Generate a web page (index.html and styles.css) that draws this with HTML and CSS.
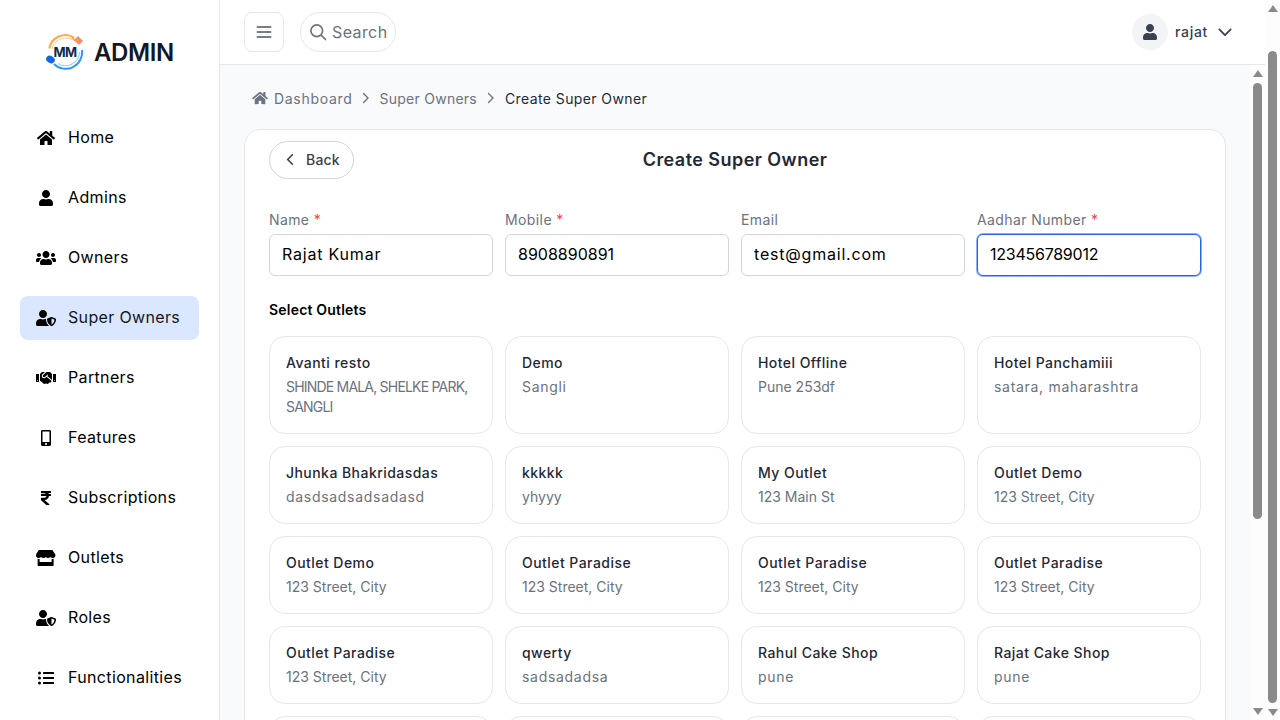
FILE: index.html
```html
<!DOCTYPE html>
<html lang="en">
<head>
    <meta charset="UTF-8">
    <meta name="viewport" content="width=device-width, initial-scale=1.0">
    <title>Create Super Owner</title>
    <link rel="stylesheet" href="styles.css">
</head>
<body>
    <div class="app">
        <aside class="sidebar">
            <div class="brand">
                <svg class="brand-logo" viewBox="0 0 40 38">
                    <path d="M4.200 15.500 A16.500 16.500 0 0 1 29 4.500" fill="none" stroke="#f9a94f" stroke-width="2"/>
                    <path d="M7 16 A14 14 0 0 1 27 6.500" fill="none" stroke="#fbc98d" stroke-width="1"/>
                    <path d="M37 17 A16.500 16.500 0 0 1 9 31" fill="none" stroke="#2b9af3" stroke-width="2"/>
                    <path d="M34.500 19 A14 14 0 0 1 13 30.500" fill="none" stroke="#86cbfb" stroke-width="1"/>
                    <path d="M29 7 L33 3 L38 8 L34 12 Z" fill="#f58f63"/>
                    <path d="M27 4.500 L31 8.500" stroke="#f9a94f" stroke-width="2"/>
                    <ellipse cx="5.500" cy="26.500" rx="4.500" ry="3.600" fill="#1266e3" transform="rotate(30 5.500 26.500)"/>
                    <text x="20" y="23.500" text-anchor="middle" class="brand-mm">MM</text>
                </svg>
                <span class="brand-name">ADMIN</span>
            </div>
            <nav class="nav">
                <a class="nav-item"><span class="nav-icon"><svg viewBox="0 0 576 512"><path d="M280.37 148.26L96 300.11V464a16 16 0 0 0 16 16l112.06-.29a16 16 0 0 0 15.92-16V368a16 16 0 0 1 16-16h64a16 16 0 0 1 16 16v95.64a16 16 0 0 0 16 16.05L464 480a16 16 0 0 0 16-16V300L295.67 148.26a12.19 12.19 0 0 0-15.3 0zM571.6 251.47L488 182.56V44.05a12 12 0 0 0-12-12h-56a12 12 0 0 0-12 12v72.61L318.47 43a48 48 0 0 0-61 0L4.34 251.47a12 12 0 0 0-1.6 16.9l25.5 31A12 12 0 0 0 45.15 301l235.22-193.74a12.19 12.19 0 0 1 15.3 0L530.9 301a12 12 0 0 0 16.9-1.6l25.5-31a12 12 0 0 0-1.7-16.93z"/></svg></span>Home</a>
                <a class="nav-item"><span class="nav-icon"><svg viewBox="0 0 448 512"><path d="M224 256c70.700 0 128-57.300 128-128S294.700 0 224 0 96 57.300 96 128s57.300 128 128 128zm89.600 32h-16.700c-22.200 10.200-46.900 16-72.900 16s-50.600-5.800-72.900-16h-16.700C60.200 288 0 348.200 0 422.400V464c0 26.500 21.500 48 48 48h352c26.500 0 48-21.500 48-48v-41.600c0-74.200-60.200-134.400-134.400-134.400z"/></svg></span>Admins</a>
                <a class="nav-item"><span class="nav-icon"><svg viewBox="0 0 640 512"><path d="M96 224c35.300 0 64-28.700 64-64s-28.700-64-64-64-64 28.700-64 64 28.700 64 64 64zm448 0c35.300 0 64-28.700 64-64s-28.700-64-64-64-64 28.700-64 64 28.700 64 64 64zm32 32h-64c-17.600 0-33.500 7.100-45.100 18.600 40.300 22.100 68.900 62 75.100 109.400h66c17.700 0 32-14.300 32-32v-32c0-35.300-28.700-64-64-64zm-256 0c61.900 0 112-50.100 112-112S381.900 32 320 32 208 82.100 208 144s50.100 112 112 112zm76.800 32h-8.300c-20.800 10-43.900 16-68.500 16s-47.600-6-68.500-16h-8.300C179.600 288 128 339.600 128 403.200V432c0 26.500 21.500 48 48 48h288c26.500 0 48-21.500 48-48v-28.800c0-63.600-51.600-115.200-115.200-115.200zm-223.700-13.400C161.500 263.100 145.600 256 128 256H64c-35.300 0-64 28.700-64 64v32c0 17.700 14.300 32 32 32h65.900c6.300-47.400 34.900-87.300 75.200-109.400z"/></svg></span>Owners</a>
                <a class="nav-item nav-item-active"><span class="nav-icon"><svg viewBox="0 0 640 512"><path d="M622.300 271.100l-115.200-45c-4.100-1.600-12.600-3.700-22.200 0l-115.200 45c-10.700 4.200-17.700 14-17.700 24.900 0 111.600 68.700 188.800 132.900 213.900 9.600 3.700 18 1.600 22.200 0C558.400 489.900 640 420.500 640 296c0-10.900-7-20.700-17.700-24.900zM496 462.400V273.300l95.500 37.300c-5.600 87.100-60.900 135.400-95.500 151.800zM224 256c70.700 0 128-57.300 128-128S294.700 0 224 0 96 57.300 96 128s57.300 128 128 128zm96 40c0-2.500.8-4.800 1.100-7.200-2.500-.1-4.900-.8-7.500-.8h-16.700c-22.200 10.200-46.900 16-72.900 16s-50.600-5.800-72.900-16h-16.700C60.200 288 0 348.200 0 422.400V464c0 26.500 21.500 48 48 48h352c6.800 0 13.300-1.500 19.200-4-54-42.900-99.200-116.700-99.200-212z"/></svg></span>Super Owners</a>
                <a class="nav-item"><span class="nav-icon"><svg viewBox="0 0 640 512"><path d="M434.700 64h-85.900c-8 0-15.700 3-21.600 8.400l-98.300 90c-.1.1-.2.3-.3.4-16.600 15.600-16.300 40.500-2.100 56 12.700 13.900 39.400 17.600 56.100 2.700.1-.1.3-.1.4-.2l79.900-73.200c6.500-5.900 16.700-5.500 22.600 1 6 6.500 5.500 16.600-1 22.600l-26.100 23.900L504 313.800c2.900 2.400 5.500 5 7.900 7.700V128l-54.600-54.600c-5.900-6-14.100-9.400-22.600-9.400zM544 128.200v223.900c0 17.700 14.300 32 32 32h64V128.200h-96zm48 223.900c-8.800 0-16-7.200-16-16s7.200-16 16-16 16 7.200 16 16-7.200 16-16 16zM0 384h64c17.700 0 32-14.300 32-32V128.200H0V384zm48-63.900c8.800 0 16 7.200 16 16s-7.200 16-16 16-16-7.200-16-16c0-8.900 7.200-16 16-16zm435.900 18.600L334.600 217.500l-30 27.500c-29.700 27.100-75.200 24.500-101.700-4.400-26.900-29.400-24.800-74.900 4.400-101.700L289.100 64h-83.800c-8.500 0-16.600 3.400-22.600 9.400L128 128v223.900h18.300l90.500 81.900c27.400 22.300 67.700 18.100 90-9.300l.2-.2 17.900 15.500c15.900 13 39.400 10.500 52.300-5.400l31.400-38.600 5.400 4.400c13.700 11.100 33.900 9.100 45-4.700l9.500-11.700c11.200-13.800 9.100-33.900-4.600-45.100z"/></svg></span>Partners</a>
                <a class="nav-item"><span class="nav-icon"><svg viewBox="0 0 320 512"><path d="M272 0H48C21.500 0 0 21.500 0 48v416c0 26.500 21.500 48 48 48h224c26.500 0 48-21.500 48-48V48c0-26.500-21.500-48-48-48zM160 480c-17.700 0-32-14.300-32-32s14.300-32 32-32 32 14.300 32 32-14.300 32-32 32zm112-108c0 6.600-5.400 12-12 12H60c-6.600 0-12-5.400-12-12V60c0-6.600 5.400-12 12-12h200c6.600 0 12 5.400 12 12v312z"/></svg></span>Features</a>
                <a class="nav-item"><span class="nav-icon"><svg viewBox="0 0 320 512"><path d="M308 96c6.627 0 12-5.373 12-12V44c0-6.627-5.373-12-12-12H12C5.373 32 0 37.373 0 44v44.748c0 6.627 5.373 12 12 12h85.280c27.308 0 48.261 9.958 60.970 27.252H12c-6.627 0-12 5.373-12 12v40c0 6.627 5.373 12 12 12h158.757c-6.217 36.086-32.961 58.632-74.757 58.632H12c-6.627 0-12 5.373-12 12v53.012c0 3.349 1.400 6.546 3.861 8.818l165.052 152.356a12.001 12.001 0 0 0 8.139 3.182h82.562c10.924 0 16.166-13.408 8.139-20.818L116.871 319.906c76.499-2.340 131.144-53.395 138.318-127.906H308c6.627 0 12-5.373 12-12v-40c0-6.627-5.373-12-12-12h-58.690c-3.486-11.541-8.280-22.246-14.252-32H308z"/></svg></span>Subscriptions</a>
                <a class="nav-item"><span class="nav-icon"><svg viewBox="0 0 616 512"><path d="M602 118.600L537.100 15C531.300 5.700 521 0 510 0H106C95 0 84.700 5.700 78.900 15L14 118.600c-33.900 54.100-3.900 129.300 59.400 137.900 4.600.6 9.200.9 13.700.9 29.900 0 56.400-13.100 74.600-33.400 18.200 20.300 44.800 33.400 74.600 33.400 29.900 0 56.400-13.100 74.600-33.400 18.200 20.300 44.800 33.400 74.600 33.400 30 0 56.400-13.100 74.600-33.400 18.300 20.300 44.800 33.400 74.600 33.400 4.600 0 9.100-.3 13.700-.9 63.500-8.500 93.600-83.700 59.600-137.900zM529.500 288c-10 0-19.900-1.500-29.500-3.800V384H116v-99.800c-9.600 2.200-19.500 3.800-29.500 3.800-6 0-12.100-.4-18-1.200-5.600-.8-11.100-2.100-16.400-3.600V480c0 17.700 14.300 32 32 32h448c17.700 0 32-14.300 32-32V283.200c-5.400 1.600-10.800 2.900-16.400 3.600-6.100.8-12.100 1.200-18.200 1.200z"/></svg></span>Outlets</a>
                <a class="nav-item"><span class="nav-icon"><svg viewBox="0 0 640 512"><path d="M622.300 271.100l-115.200-45c-4.100-1.600-12.600-3.700-22.200 0l-115.200 45c-10.700 4.200-17.700 14-17.700 24.900 0 111.600 68.700 188.800 132.900 213.900 9.600 3.700 18 1.600 22.200 0C558.400 489.900 640 420.500 640 296c0-10.900-7-20.700-17.700-24.900zM496 462.400V273.300l95.500 37.300c-5.600 87.100-60.900 135.400-95.500 151.800zM224 256c70.700 0 128-57.300 128-128S294.700 0 224 0 96 57.300 96 128s57.300 128 128 128zm96 40c0-2.500.8-4.800 1.100-7.200-2.500-.1-4.900-.8-7.500-.8h-16.700c-22.200 10.200-46.900 16-72.900 16s-50.600-5.800-72.900-16h-16.700C60.200 288 0 348.200 0 422.400V464c0 26.500 21.500 48 48 48h352c6.800 0 13.300-1.500 19.200-4-54-42.900-99.200-116.700-99.200-212z"/></svg></span>Roles</a>
                <a class="nav-item"><span class="nav-icon"><svg viewBox="0 0 512 512"><path d="M48 48a48 48 0 1 0 48 48 48 48 0 0 0-48-48zm0 160a48 48 0 1 0 48 48 48 48 0 0 0-48-48zm0 160a48 48 0 1 0 48 48 48 48 0 0 0-48-48zm448 16H176a16 16 0 0 0-16 16v32a16 16 0 0 0 16 16h320a16 16 0 0 0 16-16v-32a16 16 0 0 0-16-16zm0-320H176a16 16 0 0 0-16 16v32a16 16 0 0 0 16 16h320a16 16 0 0 0 16-16V80a16 16 0 0 0-16-16zm0 160H176a16 16 0 0 0-16 16v32a16 16 0 0 0 16 16h320a16 16 0 0 0 16-16v-32a16 16 0 0 0-16-16z"/></svg></span>Functionalities</a>
            </nav>
        </aside>

        <div class="page">
            <header class="topbar">
                <button class="menu-btn">
                    <svg viewBox="0 0 24 24" width="20" height="20"><path d="M4 6h16M4 12h16M4 18h16" fill="none" stroke="#4b5563" stroke-width="2" stroke-linecap="round"/></svg>
                </button>
                <div class="search">
                    <svg viewBox="0 0 24 24" width="20" height="20"><circle cx="10.500" cy="10.500" r="7" fill="none" stroke="#6b7280" stroke-width="2"/><path d="M16 16l5 5" stroke="#6b7280" stroke-width="2" stroke-linecap="round"/></svg>
                    <span>Search</span>
                </div>
                <div class="profile">
                    <span class="avatar"><svg viewBox="0 0 448 512" width="14" height="16"><path fill="#374151" d="M224 256c70.700 0 128-57.300 128-128S294.700 0 224 0 96 57.300 96 128s57.300 128 128 128zm89.600 32h-16.700c-22.200 10.200-46.900 16-72.900 16s-50.600-5.800-72.900-16h-16.700C60.200 288 0 348.200 0 422.400V464c0 26.500 21.500 48 48 48h352c26.500 0 48-21.500 48-48v-41.600c0-74.200-60.200-134.400-134.400-134.400z"/></svg></span>
                    <span class="profile-name">rajat</span>
                    <svg viewBox="0 0 16 10" width="14" height="9"><path d="M1.500 1.500L8 8l6.500-6.500" fill="none" stroke="#374151" stroke-width="2" stroke-linecap="round" stroke-linejoin="round"/></svg>
                </div>
            </header>

            <div class="main">
                <main class="content">
                    <div class="crumbs">
                        <svg class="crumb-home" viewBox="0 0 576 512"><path d="M280.370 148.260L96 300.110V464a16 16 0 0 0 16 16l112.060-.29a16 16 0 0 0 15.920-16V368a16 16 0 0 1 16-16h64a16 16 0 0 1 16 16v95.640a16 16 0 0 0 16 16.050L464 480a16 16 0 0 0 16-16V300L295.670 148.260a12.190 12.190 0 0 0-15.300 0zM571.600 251.470L488 182.560V44.050a12 12 0 0 0-12-12h-56a12 12 0 0 0-12 12v72.610L318.470 43a48 48 0 0 0-61 0L4.340 251.470a12 12 0 0 0-1.600 16.900l25.500 31A12 12 0 0 0 45.150 301l235.220-193.740a12.190 12.190 0 0 1 15.300 0L530.900 301a12 12 0 0 0 16.900-1.600l25.500-31a12 12 0 0 0-1.700-16.930z"/></svg>
                        <span class="crumb crumb-first">Dashboard</span>
                        <svg class="crumb-sep" viewBox="0 0 8 12"><path d="M1.500 1.500L6 6l-4.500 4.500" fill="none" stroke="#6b7280" stroke-width="1.400" stroke-linecap="round" stroke-linejoin="round"/></svg>
                        <span class="crumb crumb-second">Super Owners</span>
                        <svg class="crumb-sep" viewBox="0 0 8 12"><path d="M1.500 1.500L6 6l-4.500 4.500" fill="none" stroke="#6b7280" stroke-width="1.400" stroke-linecap="round" stroke-linejoin="round"/></svg>
                        <span class="crumb crumb-current">Create Super Owner</span>
                    </div>

                    <section class="card">
                        <div class="card-head">
                            <button class="back-btn">
                                <svg viewBox="0 0 10 16" width="8" height="13"><path d="M8 2L2 8l6 6" fill="none" stroke="#374151" stroke-width="2" stroke-linecap="round" stroke-linejoin="round"/></svg>
                                <span>Back</span>
                            </button>
                            <h1 class="card-title">Create Super Owner</h1>
                        </div>

                        <div class="fields">
                            <label class="field"><span class="field-label">Name <em>*</em></span><input class="field-input" type="text" value="Rajat Kumar"></label>
                            <label class="field"><span class="field-label">Mobile <em>*</em></span><input class="field-input field-input-num" type="text" value="8908890891"></label>
                            <label class="field"><span class="field-label">Email</span><input class="field-input" type="text" value="test@gmail.com"></label>
                            <label class="field"><span class="field-label">Aadhar Number <em>*</em></span><input class="field-input field-input-num is-focus" type="text" value="123456789012"></label>
                        </div>

                        <h2 class="section-title">Select Outlets</h2>
                        <div class="outlets">
                            <div class="outlet"><div class="outlet-name">Avanti resto</div><div class="outlet-addr outlet-addr-caps">SHINDE MALA, SHELKE PARK,<br>SANGLI</div></div>
                            <div class="outlet"><div class="outlet-name">Demo</div><div class="outlet-addr outlet-addr-wide">Sangli</div></div>
                            <div class="outlet"><div class="outlet-name">Hotel Offline</div><div class="outlet-addr">Pune 253df</div></div>
                            <div class="outlet"><div class="outlet-name">Hotel Panchamiii</div><div class="outlet-addr outlet-addr-wide">satara, maharashtra</div></div>
                            <div class="outlet"><div class="outlet-name">Jhunka Bhakridasdas</div><div class="outlet-addr outlet-addr-wide">dasdsadsadsadasd</div></div>
                            <div class="outlet"><div class="outlet-name">kkkkk</div><div class="outlet-addr">yhyyy</div></div>
                            <div class="outlet"><div class="outlet-name">My Outlet</div><div class="outlet-addr">123 Main St</div></div>
                            <div class="outlet"><div class="outlet-name">Outlet Demo</div><div class="outlet-addr">123 Street, City</div></div>
                            <div class="outlet"><div class="outlet-name">Outlet Demo</div><div class="outlet-addr">123 Street, City</div></div>
                            <div class="outlet"><div class="outlet-name">Outlet Paradise</div><div class="outlet-addr">123 Street, City</div></div>
                            <div class="outlet"><div class="outlet-name">Outlet Paradise</div><div class="outlet-addr">123 Street, City</div></div>
                            <div class="outlet"><div class="outlet-name">Outlet Paradise</div><div class="outlet-addr">123 Street, City</div></div>
                            <div class="outlet"><div class="outlet-name">Outlet Paradise</div><div class="outlet-addr">123 Street, City</div></div>
                            <div class="outlet"><div class="outlet-name">qwerty</div><div class="outlet-addr outlet-addr-wide">sadsadadsa</div></div>
                            <div class="outlet"><div class="outlet-name">Rahul Cake Shop</div><div class="outlet-addr outlet-addr-wide">pune</div></div>
                            <div class="outlet"><div class="outlet-name">Rajat Cake Shop</div><div class="outlet-addr outlet-addr-wide">pune</div></div>
                            <div class="outlet outlet-empty"></div>
                            <div class="outlet outlet-empty"></div>
                            <div class="outlet outlet-empty"></div>
                            <div class="outlet outlet-empty"></div>
                        </div>
                    </section>
                </main>
                <div class="scrollbar scrollbar-inner">
                    <span class="arrow arrow-up"></span>
                    <span class="thumb"></span>
                    <span class="arrow arrow-down"></span>
                </div>
            </div>
        </div>

        <div class="scrollbar scrollbar-outer">
            <span class="arrow arrow-up"></span>
            <span class="thumb"></span>
            <span class="arrow arrow-down"></span>
        </div>
    </div>
</body>
</html>
```

FILE: styles.css
```css
* {
    box-sizing: border-box;
}

html, body {
    margin: 0;
    padding: 0;
    height: 100%;
    overflow: hidden;
}

body {
    font-family: 'Inter', 'Liberation Sans', sans-serif;
    color: #111827;
    background: #fff;
}

.app {
    display: flex;
    height: 720px;
}

/* sidebar */
.sidebar {
    width: 220px;
    flex-shrink: 0;
    background: #fff;
    border-right: 1px solid #e5e7eb;
    overflow: hidden;
}

.brand {
    display: flex;
    align-items: center;
    height: 104px;
    padding-left: 45px;
    gap: 9px;
}

.brand-logo {
    width: 40px;
    height: 38px;
}

.brand-mm {
    font-family: 'Inter', sans-serif;
    font-size: 13px;
    font-weight: 700;
    letter-spacing: -0.5px;
    fill: #0f2a4d;
}

.brand-name {
    font-size: 24px;
    font-weight: 600;
    letter-spacing: -0.4px;
    color: #111827;
}

.nav {
    display: flex;
    flex-direction: column;
    gap: 16px;
    padding: 12px 20px 0;
}

.nav-item {
    display: flex;
    align-items: center;
    height: 44px;
    flex-shrink: 0;
    padding: 0 0 2px 16px;
    border-radius: 8px;
    font-size: 16px;
    letter-spacing: 0.35px;
    color: #000;
}

.nav-item-active {
    background: #dbe7fe;
    color: #111827;
}

.nav-icon {
    display: flex;
    justify-content: center;
    width: 20px;
    margin: 2px 12px 0 0;
}

.nav-icon svg {
    height: 16px;
    max-width: 20px;
    fill: #000;
}

/* top bar */
.page {
    flex: 1;
    min-width: 0;
    display: flex;
    flex-direction: column;
}

.topbar {
    display: flex;
    align-items: center;
    height: 65px;
    flex-shrink: 0;
    padding: 0 33px 0 24px;
    background: #fff;
    border-bottom: 1px solid #e5e7eb;
}

.menu-btn {
    display: flex;
    align-items: center;
    justify-content: center;
    width: 40px;
    height: 40px;
    padding: 0;
    background: #fff;
    border: 1px solid #e5e7eb;
    border-radius: 8px;
}

.search {
    display: flex;
    align-items: center;
    gap: 4px;
    width: 96px;
    height: 40px;
    margin-left: 16px;
    padding-left: 7px;
    border: 1px solid #e5e7eb;
    border-radius: 20px;
    font-size: 16px;
    letter-spacing: 0.4px;
    color: #6b7280;
}

.profile {
    display: flex;
    align-items: center;
    margin-left: auto;
}

.avatar {
    display: flex;
    align-items: center;
    justify-content: center;
    width: 36px;
    height: 36px;
    border-radius: 50%;
    background: #f3f4f6;
}

.profile-name {
    margin: 0 10px 0 7px;
    padding-bottom: 2px;
    font-size: 14px;
    font-weight: 500;
    letter-spacing: 0.7px;
    color: #374151;
}

/* main area */
.main {
    flex: 1;
    min-height: 0;
    display: flex;
}

.content {
    flex: 1;
    min-width: 0;
    overflow: hidden;
    padding: 0 24px;
    background: #f9fafb;
}

.crumbs {
    display: flex;
    align-items: center;
    height: 64px;
    padding: 2px 0 0 8px;
    font-size: 14px;
    letter-spacing: 0.4px;
    color: #6b7280;
}

.crumb-home {
    width: 16px;
    height: 14px;
    fill: #6b7280;
}

.crumb-first {
    margin: 0 -1px 0 6px;
    letter-spacing: 0.7px;
}

.crumb-second {
    letter-spacing: 0.25px;
}

.crumb-sep {
    width: 8px;
    height: 12px;
    margin: 0 10px;
}

.crumb-current {
    color: #1f2937;
}

.card {
    background: #fff;
    border: 1px solid #e5e7eb;
    border-radius: 16px;
    padding: 11px 24px 24px;
}

.card-head {
    position: relative;
    display: flex;
    align-items: center;
    justify-content: center;
    height: 38px;
}

.back-btn {
    position: absolute;
    left: 0;
    top: 0;
    display: flex;
    align-items: center;
    gap: 12px;
    width: 85px;
    height: 38px;
    padding: 0 0 2px 16px;
    background: #fff;
    border: 1px solid #d1d5db;
    border-radius: 19px;
    font-family: inherit;
    font-size: 14px;
    font-weight: 500;
    letter-spacing: 0.2px;
    color: #374151;
}

.card-title {
    margin: 0;
    padding-bottom: 2px;
    font-size: 18px;
    font-weight: 600;
    letter-spacing: 0.45px;
    color: #1f2937;
}

.fields {
    display: grid;
    grid-template-columns: repeat(4, 1fr);
    gap: 12px;
    margin-top: 31px;
}

.field-label {
    display: block;
    height: 20px;
    margin-bottom: 4px;
    font-size: 14px;
    line-height: 20px;
    letter-spacing: 0.4px;
    color: #6b7280;
}

.field-label em {
    font-style: normal;
    color: #ef4444;
}

.field-input {
    display: block;
    width: 100%;
    height: 42px;
    padding: 0 12px 2px;
    border: 1px solid #d1d5db;
    border-radius: 6px;
    background: #fff;
    font-family: inherit;
    font-size: 16px;
    letter-spacing: 0.8px;
    color: #000;
    outline: none;
}

.field-input-num {
    letter-spacing: 0;
}

.is-focus {
    letter-spacing: -0.25px;
    border-color: #2563eb;
    box-shadow: 0 0 0 1px rgba(37, 99, 235, 0.5);
}

.section-title {
    margin: 24px 0 16px;
    font-size: 14px;
    line-height: 20px;
    font-weight: 600;
    letter-spacing: 0.2px;
    color: #000;
}

.outlets {
    display: grid;
    grid-template-columns: repeat(4, 1fr);
    gap: 12px;
}

.outlet {
    min-height: 78px;
    padding: 16px;
    border: 1px solid #e5e7eb;
    border-radius: 16px;
    background: #fff;
}

.outlet-name {
    font-size: 14px;
    line-height: 20px;
    font-weight: 500;
    letter-spacing: 0.45px;
    color: #1f2937;
}

.outlet-addr {
    margin-top: 4px;
    font-size: 14px;
    line-height: 20px;
    color: #6b7280;
}

.outlet-addr-wide {
    letter-spacing: 0.7px;
}

.outlet-addr-caps {
    letter-spacing: -0.8px;
    white-space: nowrap;
}

/* scrollbars */
.scrollbar {
    position: relative;
    display: flex;
    flex-direction: column;
    align-items: center;
    flex-shrink: 0;
    width: 15px;
    background: #fdfdfd;
}

.scrollbar-outer {
    height: 720px;
    padding-top: 5px;
}

.scrollbar-outer .thumb {
    height: 652px;
    margin: 39px 0 6px;
}

.scrollbar-inner {
    padding-top: 5px;
}

.scrollbar-inner .thumb {
    height: 436px;
    margin: 6px 0 189px;
}

.thumb {
    display: block;
    width: 9px;
    flex-shrink: 0;
    background: #8a8a8a;
    border-radius: 5px;
}

.arrow {
    display: block;
    width: 0;
    height: 0;
    flex-shrink: 0;
    border-left: 5px solid transparent;
    border-right: 5px solid transparent;
}

.arrow-up {
    border-bottom: 7px solid #8a8a8a;
}

.arrow-down {
    border-top: 7px solid #8a8a8a;
}
```
